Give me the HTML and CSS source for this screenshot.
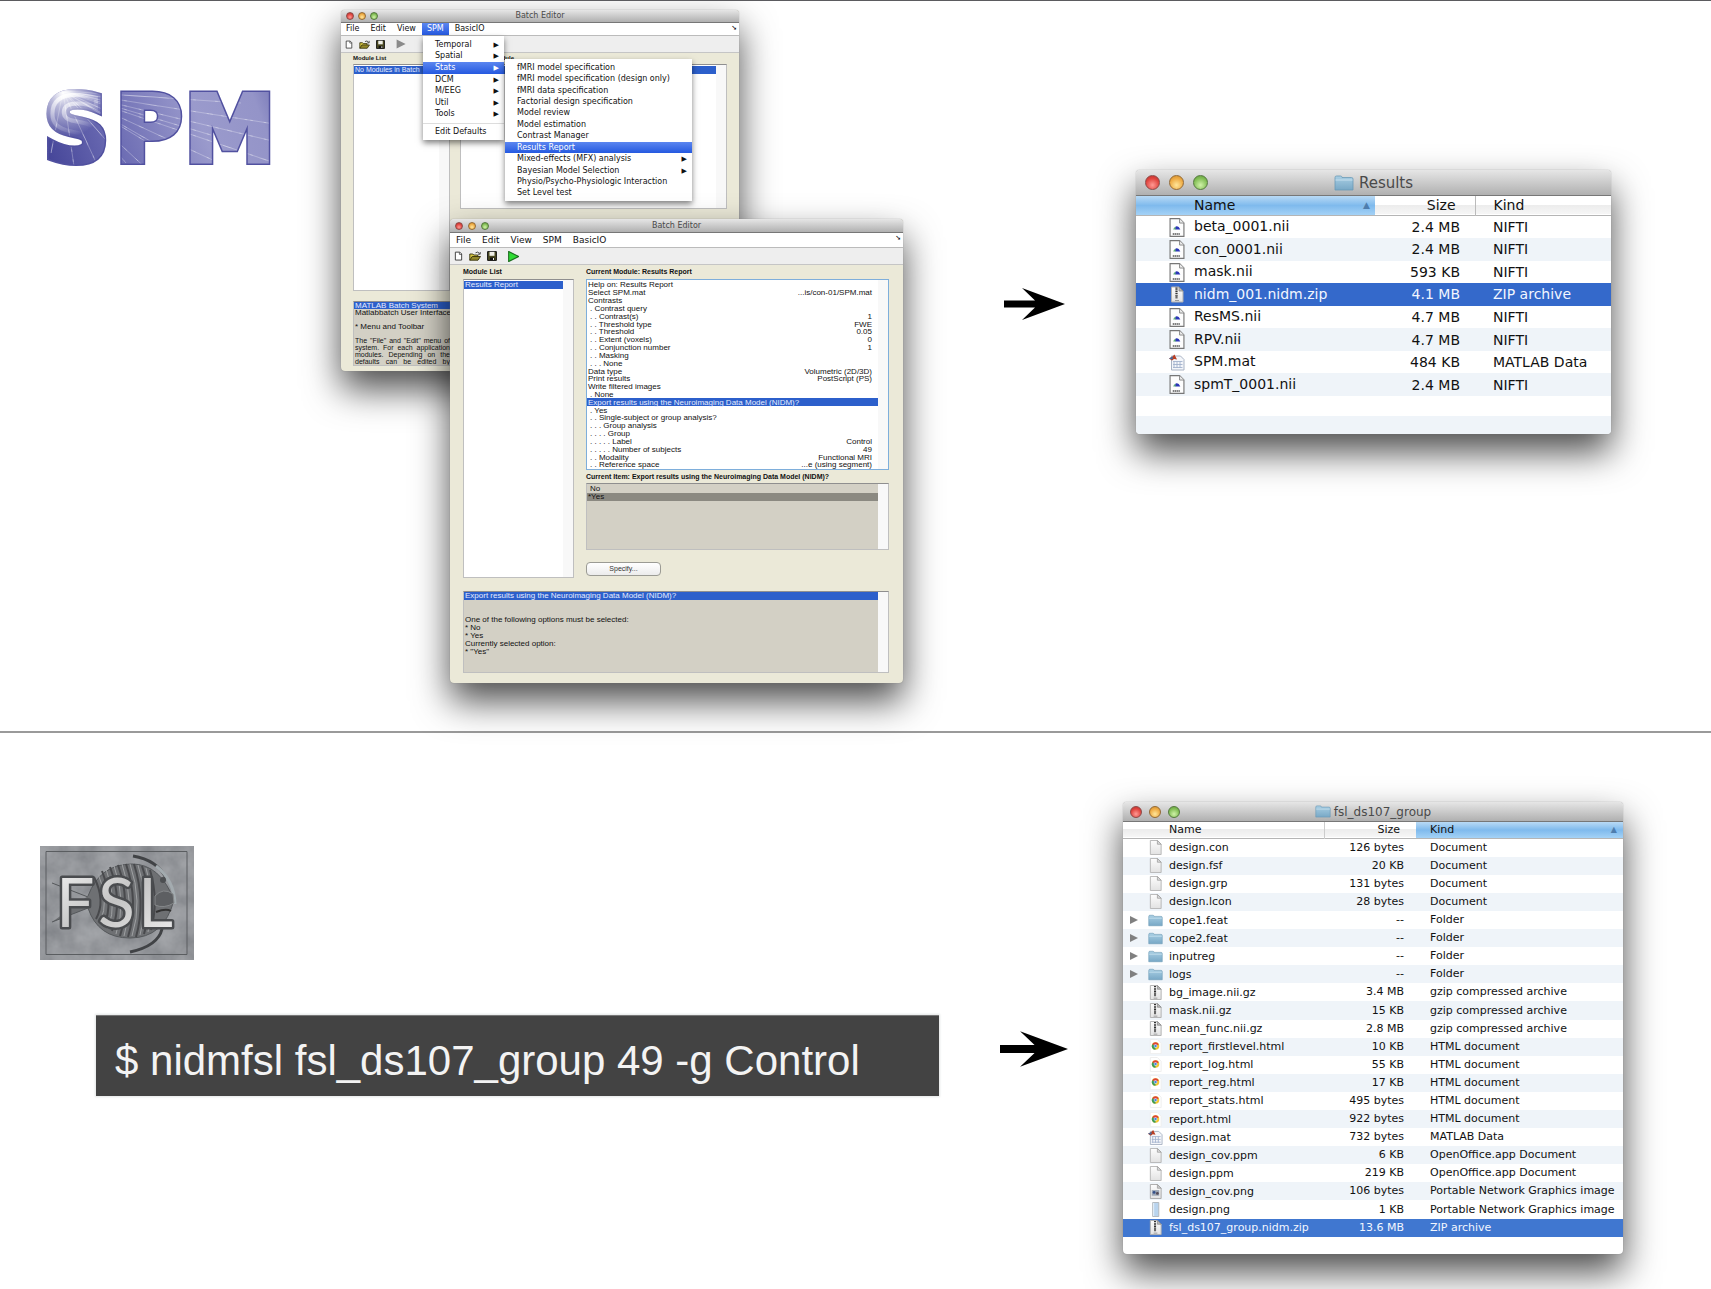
FILE: index.html
```html
<!DOCTYPE html>
<html lang="en">
<head>
<meta charset="utf-8">
<title>NIDM-Results export from SPM and FSL</title>
<link rel="stylesheet" href="styles.css">
</head>
<body>
<svg class="defs" width="0" height="0" aria-hidden="true">
  <defs>
    <linearGradient id="paper" x1="0" y1="0" x2="0" y2="1"><stop offset="0" stop-color="#fdfdfd"/><stop offset="1" stop-color="#e2e2e2"/></linearGradient>
    <linearGradient id="blue" x1="0" y1="0" x2="0" y2="1"><stop offset="0" stop-color="#a9cfe4"/><stop offset="1" stop-color="#78a8c6"/></linearGradient>
  </defs>
  <symbol id="i-doc" viewBox="0 0 16 16"><path d="M2.5.5h7.5l4 4v11H2.5z" fill="url(#paper)" stroke="#b5b5b5"/><path d="M10 .5v4h4z" fill="#ddd" stroke="#999" stroke-width=".8"/></symbol>
  <symbol id="i-nii" viewBox="0 0 16 20"><path d="M.7.7h10l4.600 4.600v14H.7z" fill="#fdfdfd" stroke="#777" stroke-width="1.200"/><path d="M10.700.7v4.600h4.600" fill="#eee" stroke="#888"/><path d="M4 12q.5-2.500 3-2.500V12z" fill="#5fae7a"/><path d="M6.500 9q3-1.500 5 3h-5z" fill="#2b35b8"/><path d="M3.500 16.800h8" stroke="#555" stroke-width="1.500" stroke-dasharray="1.500 .5"/></symbol>
  <symbol id="i-zip" viewBox="0 0 16 16"><path d="M2.500.5h7.500l4 4v11H2.500z" fill="url(#paper)" stroke="#b0b0b0"/><path d="M10 .5v4h4z" fill="#bbb" stroke="#888" stroke-width=".8"/><path d="M7.500 1v8" stroke="#333" stroke-width="2.200" stroke-dasharray="1.200 .6"/><path d="M7.500 8.500v3.500" stroke="#666" stroke-width="2.200"/><path d="M6 14h4" stroke="#999"/></symbol>
  <symbol id="i-folder" viewBox="0 0 20 16"><path d="M1 15V2.500Q1 1 2.500 1h4Q8 1 8 2.500h9.500Q19 2.500 19 4v11z" fill="url(#blue)" stroke="#6b9ab6" stroke-width=".8"/><path d="M1.500 5h17" stroke="#c7e0ee"/></symbol>
  <symbol id="i-html" viewBox="0 0 16 16"><path d="M2.500.5h7.500l4 4v11H2.500z" fill="#fff" stroke="#eee"/><circle cx="8" cy="7.500" r="4" fill="#f2c531"/><path d="M8 7.500 4.500 5.500A4 4 0 0 1 11.500 5.500z" fill="#dc4437"/><path d="M8 7.500 4.500 5.500A4 4 0 0 0 8 11.500z" fill="#3b9c59"/><circle cx="8" cy="7.500" r="1.900" fill="#fff"/><circle cx="8" cy="7.500" r="1.400" fill="#4a83dd"/></symbol>
  <symbol id="i-mat" viewBox="0 0 16 16"><path d="M2.500 1.500h9l3.500 3.500v10.500H2.500z" fill="#f4f6fa" stroke="#a9b3c4"/><path d="M4 7h9.500M4 10h9.500M4 13h9.500M5 7v6.500M8 7v6.500M11 7v6.500" stroke="#a3b2cd" stroke-width=".9"/><path d="M0 4 3.500 2 5.500 0 8 5 5 4.500 3 6z" fill="#b93d22"/><path d="M0 4 3.500 2 4 4 2.500 5z" fill="#456a9b"/></symbol>
  <symbol id="i-png" viewBox="0 0 16 16"><path d="M2.500.5h7.500l4 4v11H2.500z" fill="url(#paper)" stroke="#a8a8a8"/><path d="M10 .5v4h4z" fill="#ccc" stroke="#999" stroke-width=".8"/><path d="M4 6.500h8v6H4z" fill="#9ba6b5"/><circle cx="6.500" cy="9" r="1.500" fill="#35508a"/><circle cx="10" cy="10" r="1.500" fill="#554a55"/></symbol>
  <symbol id="i-strip" viewBox="0 0 16 16"><path d="M5 .5h6.500v15H5z" fill="#b9d4ee" stroke="#b0b5ba"/><path d="M6 1v14" stroke="#e9f2fa"/></symbol>
  <symbol id="i-new" viewBox="0 0 10 10"><path d="M1.500.7h5l2 2v6.800h-7z" fill="#fff" stroke="#333"/><path d="M6 1v2.200h2.500" fill="none" stroke="#333" stroke-width=".8"/></symbol>
  <symbol id="i-open" viewBox="0 0 12 10"><path d="M.8 9.200V3h3l1 1h4v1.600" fill="#d6c745" stroke="#332f0a" stroke-width=".9"/><path d="M.8 9.200 3.200 5.500h8.300L9 9.200z" fill="#93882a" stroke="#332f0a" stroke-width=".9"/><path d="M6.500 1.800Q9 0 10.500 2.500M11.200 1v2.200H9" fill="none" stroke="#222" stroke-width=".8"/></symbol>
  <symbol id="i-save" viewBox="0 0 10 10"><path d="M.6.6h8.800v8.800H.6z" fill="#4c4a21" stroke="#111"/><path d="M2.500.8h5v4h-5z" fill="#efefe8"/><path d="M3 6.500h4.500V9H3z" fill="#111"/><path d="M6 7h1v2H6z" fill="#eee"/></symbol>
  <symbol id="i-run" viewBox="0 0 10 10"><path d="M.6.400 9.600 5 .6 9.600z"/></symbol>
  <symbol id="i-arrow" viewBox="0 0 61 32"><path d="M0 12.500h31L18 0l43 16-43 16 13-12.500H0z"/></symbol>
</svg>

<main class="page">
  <section class="row row-spm">
    <svg class="spm-logo" width="240" height="90" viewBox="0 0 240 90" role="img" aria-label="SPM">
      <defs>
        <linearGradient id="spmFill" gradientUnits="userSpaceOnUse" x1="0" y1="90" x2="240" y2="0"><stop offset="0" stop-color="#3f3f94"/><stop offset=".3" stop-color="#6a6ab2"/><stop offset=".65" stop-color="#9a9acc"/><stop offset=".88" stop-color="#9494c8"/><stop offset="1" stop-color="#6f6fb2"/></linearGradient>
        <radialGradient id="spmGlow" gradientUnits="userSpaceOnUse" cx="22" cy="10" r="45"><stop offset="0" stop-color="#fff"/><stop offset=".3" stop-color="#fff" stop-opacity=".6"/><stop offset="1" stop-color="#fff" stop-opacity="0"/></radialGradient>
        <pattern id="spmRays" width="240" height="90" patternUnits="userSpaceOnUse"><path d="M22 8 60 90M22 8 34 90M22 8 85 80M22 8 110 90M22 8 150 86M22 8 200 90M22 8 240 82M22 8 240 60M22 8 240 42M22 8 200 20M22 8 130 70M22 8 170 52M22 8 10 70" stroke="#fff" stroke-opacity=".35" stroke-width=".8"/></pattern>
        <text id="spmText" class="spm-word" x="3 75 144" y="78">SPM</text>
      </defs>
      <use href="#spmText" fill="#5151a0" stroke="#5151a0" stroke-width="8"/>
      <use href="#spmText" fill="url(#spmFill)" stroke="url(#spmFill)" stroke-width="5"/>
      <use href="#spmText" fill="url(#spmRays)" stroke="url(#spmRays)" stroke-width="5"/>
      <use href="#spmText" fill="url(#spmGlow)" stroke="url(#spmGlow)" stroke-width="8"/>
    </svg>

    <div class="desktop">
      <article class="batch batch-back">
        <header class="titlebar"><span class="lights"><i></i><i></i><i></i></span><h2>Batch Editor</h2></header>
        <nav class="menubar">
          <button>File</button><button>Edit</button><button>View</button><button class="open">SPM</button><button>BasicIO</button><span class="dock">➘</span>
        </nav>
        <div class="toolbar">
          <button aria-label="New"><svg width="8" height="9"><use href="#i-new"/></svg></button>
          <button aria-label="Open"><svg width="11" height="9"><use href="#i-open"/></svg></button>
          <button aria-label="Save"><svg width="9" height="9"><use href="#i-save"/></svg></button>
          <button class="run" aria-label="Run"><svg width="10" height="10"><use href="#i-run"/></svg></button>
        </div>
        <div class="batch-body">
          <div class="col"><h3>Module List</h3><ul class="list modules"><li class="sel">No Modules in Batch</li></ul></div>
          <div class="col"><h3>No Current Module</h3><ul class="list current"><li class="sel">&nbsp;</li></ul></div>
          <div class="list help">
            <p class="sel">MATLAB Batch System</p><p>Matlabbatch User Interface</p><p>&nbsp;</p><p>* Menu and Toolbar</p><p>&nbsp;</p>
            <p class="just">The "File" and "Edit" menu of</p><p class="just">system. For each application</p><p class="just">modules. Depending on the</p><p class="just">defaults can be edited by</p>
          </div>
        </div>
        <ul class="menu menu-spm">
          <li><button>Temporal<b>▶</b></button></li><li><button>Spatial<b>▶</b></button></li><li class="hot"><button>Stats<b>▶</b></button></li><li><button>DCM<b>▶</b></button></li><li><button>M/EEG<b>▶</b></button></li><li><button>Util<b>▶</b></button></li><li><button>Tools<b>▶</b></button></li>
          <li class="last"><button>Edit Defaults</button></li>
        </ul>
        <ul class="menu menu-stats">
          <li><button>fMRI model specification</button></li><li><button>fMRI model specification (design only)</button></li><li><button>fMRI data specification</button></li><li><button>Factorial design specification</button></li><li><button>Model review</button></li><li><button>Model estimation</button></li><li><button>Contrast Manager</button></li><li class="hot"><button>Results Report</button></li><li><button>Mixed-effects (MFX) analysis<b>▶</b></button></li><li><button>Bayesian Model Selection<b>▶</b></button></li><li><button>Physio/Psycho-Physiologic Interaction</button></li><li><button>Set Level test</button></li>
        </ul>
      </article>

      <article class="batch batch-front">
        <header class="titlebar"><span class="lights"><i></i><i></i><i></i></span><h2>Batch Editor</h2></header>
        <nav class="menubar">
          <button>File</button><button>Edit</button><button>View</button><button>SPM</button><button>BasicIO</button><span class="dock">➘</span>
        </nav>
        <div class="toolbar">
          <button aria-label="New"><svg width="9" height="10"><use href="#i-new"/></svg></button>
          <button aria-label="Open"><svg width="12" height="10"><use href="#i-open"/></svg></button>
          <button aria-label="Save"><svg width="10" height="10"><use href="#i-save"/></svg></button>
          <button class="run" aria-label="Run"><svg width="11" height="11"><use href="#i-run"/></svg></button>
        </div>
        <div class="batch-body">
          <div class="col"><h3>Module List</h3><ul class="list modules"><li class="sel">Results Report</li></ul></div>
          <div class="col">
            <h3>Current Module: Results Report</h3>
            <ul class="list current">
              <li>Help on: Results Report</li>
              <li>Select SPM.mat<span>...is/con-01/SPM.mat</span></li>
              <li>Contrasts</li>
              <li class="in">. Contrast query</li>
              <li class="in">. . Contrast(s)<span>1</span></li>
              <li class="in">. . Threshold type<span>FWE</span></li>
              <li class="in">. . Threshold<span>0.05</span></li>
              <li class="in">. . Extent (voxels)<span>0</span></li>
              <li class="in">. . Conjunction number<span>1</span></li>
              <li class="in">. . Masking</li>
              <li class="in">. . . None</li>
              <li>Data type<span>Volumetric (2D/3D)</span></li>
              <li>Print results<span>PostScript (PS)</span></li>
              <li>Write filtered images</li>
              <li class="in">. None</li>
              <li class="sel">Export results using the Neuroimaging Data Model (NIDM)?</li>
              <li class="in">. Yes</li>
              <li class="in">. . Single-subject or group analysis?</li>
              <li class="in">. . . Group analysis</li>
              <li class="in">. . . . Group</li>
              <li class="in">. . . . . Label<span>Control</span></li>
              <li class="in">. . . . . Number of subjects<span>49</span></li>
              <li class="in">. . Modality<span>Functional MRI</span></li>
              <li class="in">. . Reference space<span>...e (using segment)</span></li>
            </ul>
            <h3 class="item-title">Current Item: Export results using the Neuroimaging Data Model (NIDM)?</h3>
            <ul class="list options"><li class="in">No</li><li class="chosen">*Yes</li></ul>
            <button class="specify">Specify...</button>
          </div>
          <div class="list help">
            <p class="sel">Export results using the Neuroimaging Data Model (NIDM)?</p><p>&nbsp;</p><p>&nbsp;</p>
            <p>One of the following options must be selected:</p><p>* No</p><p>* Yes</p><p>Currently selected option:</p><p>* "Yes"</p>
          </div>
        </div>
      </article>
    </div>

    <svg class="arrow" width="61" height="32" aria-hidden="true"><use href="#i-arrow"/></svg>

    <article class="finder finder-results">
      <header class="titlebar"><span class="lights"><i></i><i></i><i></i></span><h2><svg width="20" height="16"><use href="#i-folder"/></svg>Results</h2></header>
      <table>
        <thead><tr><th class="name sorted">Name<b>▲</b></th><th class="size">Size</th><th class="kind">Kind</th></tr></thead>
        <tbody>
          <tr><td class="name"><svg><use href="#i-nii"/></svg>beta_0001.nii</td><td class="size">2.4 MB</td><td class="kind">NIFTI</td></tr>
          <tr><td class="name"><svg><use href="#i-nii"/></svg>con_0001.nii</td><td class="size">2.4 MB</td><td class="kind">NIFTI</td></tr>
          <tr><td class="name"><svg><use href="#i-nii"/></svg>mask.nii</td><td class="size">593 KB</td><td class="kind">NIFTI</td></tr>
          <tr class="selected"><td class="name"><svg><use href="#i-zip"/></svg>nidm_001.nidm.zip</td><td class="size">4.1 MB</td><td class="kind">ZIP archive</td></tr>
          <tr><td class="name"><svg><use href="#i-nii"/></svg>ResMS.nii</td><td class="size">4.7 MB</td><td class="kind">NIFTI</td></tr>
          <tr><td class="name"><svg><use href="#i-nii"/></svg>RPV.nii</td><td class="size">4.7 MB</td><td class="kind">NIFTI</td></tr>
          <tr><td class="name"><svg><use href="#i-mat"/></svg>SPM.mat</td><td class="size">484 KB</td><td class="kind">MATLAB Data</td></tr>
          <tr><td class="name"><svg><use href="#i-nii"/></svg>spmT_0001.nii</td><td class="size">2.4 MB</td><td class="kind">NIFTI</td></tr>
        </tbody>
      </table>
      <div class="filler"></div>
    </article>
  </section>

  <section class="row row-fsl">
    <div class="fsl-side">
      <svg class="fsl-logo" width="154" height="114" viewBox="0 0 154 114" role="img" aria-label="FSL">
        <defs>
          <filter id="stone" x="0" y="0" width="1" height="1"><feTurbulence type="fractalNoise" baseFrequency=".05" numOctaves="4" seed="4"/><feColorMatrix values=".5 0 0 0 .2  .5 0 0 0 .21  .5 0 0 0 .23  0 0 0 0 1"/></filter>
          <linearGradient id="chrome" x1="0" y1="0" x2="1" y2="1"><stop offset="0" stop-color="#f4f4f4"/><stop offset=".5" stop-color="#c4c4c4"/><stop offset="1" stop-color="#eee"/></linearGradient>
          <text id="fslText" class="fsl-word" x="16 58 98" y="81">FSL</text>
        </defs>
        <rect width="154" height="114" fill="#787b80"/>
        <rect width="154" height="114" filter="url(#stone)" opacity=".5"/>
        <path d="M6 5.500h141v103H6z" fill="none" stroke="#5a5d60"/>
        <path d="M48 50Q60 18 92 18q28 0 42 36-10 38-44 38-32 0-42-30L12 76m0-39 36 14" fill="#6e7073" stroke="#55585b"/>
        <g fill="none" stroke="#48494c" stroke-width="2"><path d="M54 31q12 24 2 42M62 25q12 30 2 56M70 21q13 34 2 64M78 19q13 36 2 71M86 18q13 38 2 73M94 18q12 38 2 73M102 20q12 34 2 68M110 24q9 30 1 60"/></g>
        <g fill="none" stroke="#9fa1a3"><path d="M58 28q12 26 2 48M66 23q12 32 2 60M74 20q13 35 2 68M82 18q13 37 2 72M90 18q13 38 2 72M98 19q12 36 2 70M106 22q10 32 2 64"/></g>
        <path d="M93 10q24 4 33 22M90 106q28-6 32-23" fill="none" stroke="#414346" stroke-width="3"/>
        <path d="M116 20q18 14 19 38" fill="none" stroke="#a3abaf" stroke-width="3"/>
        <path d="M115 50q8-9 18-2l1 9q-10 6-19 2z" fill="#5d5f62" stroke="#85888a"/><circle cx="123" cy="34" r="3" fill="#4c4e51"/><path d="M116 66q10-4 15-1" stroke="#333" stroke-width="2" fill="none"/>
        <use href="#fslText" stroke="#4a4c4f" stroke-width="5" stroke-linejoin="round"/>
        <use href="#fslText" fill="url(#chrome)"/>
      </svg>
      <pre class="terminal"><code>$ nidmfsl fsl_ds107_group 49 -g Control</code></pre>
    </div>

    <svg class="arrow" width="68" height="36" aria-hidden="true"><use href="#i-arrow"/></svg>

    <article class="finder finder-group">
      <header class="titlebar"><span class="lights"><i></i><i></i><i></i></span><h2><svg width="16" height="13"><use href="#i-folder"/></svg>fsl_ds107_group</h2></header>
      <table>
        <thead><tr><th class="name">Name</th><th class="size">Size</th><th class="kind sorted">Kind<b>▲</b></th></tr></thead>
        <tbody>
          <tr><td class="name"><svg><use href="#i-doc"/></svg>design.con</td><td class="size">126 bytes</td><td class="kind">Document</td></tr>
          <tr><td class="name"><svg><use href="#i-doc"/></svg>design.fsf</td><td class="size">20 KB</td><td class="kind">Document</td></tr>
          <tr><td class="name"><svg><use href="#i-doc"/></svg>design.grp</td><td class="size">131 bytes</td><td class="kind">Document</td></tr>
          <tr><td class="name"><svg><use href="#i-doc"/></svg>design.lcon</td><td class="size">28 bytes</td><td class="kind">Document</td></tr>
          <tr class="folder"><td class="name"><svg><use href="#i-folder"/></svg>cope1.feat</td><td class="size">--</td><td class="kind">Folder</td></tr>
          <tr class="folder"><td class="name"><svg><use href="#i-folder"/></svg>cope2.feat</td><td class="size">--</td><td class="kind">Folder</td></tr>
          <tr class="folder"><td class="name"><svg><use href="#i-folder"/></svg>inputreg</td><td class="size">--</td><td class="kind">Folder</td></tr>
          <tr class="folder"><td class="name"><svg><use href="#i-folder"/></svg>logs</td><td class="size">--</td><td class="kind">Folder</td></tr>
          <tr><td class="name"><svg><use href="#i-zip"/></svg>bg_image.nii.gz</td><td class="size">3.4 MB</td><td class="kind">gzip compressed archive</td></tr>
          <tr><td class="name"><svg><use href="#i-zip"/></svg>mask.nii.gz</td><td class="size">15 KB</td><td class="kind">gzip compressed archive</td></tr>
          <tr><td class="name"><svg><use href="#i-zip"/></svg>mean_func.nii.gz</td><td class="size">2.8 MB</td><td class="kind">gzip compressed archive</td></tr>
          <tr><td class="name"><svg><use href="#i-html"/></svg>report_firstlevel.html</td><td class="size">10 KB</td><td class="kind">HTML document</td></tr>
          <tr><td class="name"><svg><use href="#i-html"/></svg>report_log.html</td><td class="size">55 KB</td><td class="kind">HTML document</td></tr>
          <tr><td class="name"><svg><use href="#i-html"/></svg>report_reg.html</td><td class="size">17 KB</td><td class="kind">HTML document</td></tr>
          <tr><td class="name"><svg><use href="#i-html"/></svg>report_stats.html</td><td class="size">495 bytes</td><td class="kind">HTML document</td></tr>
          <tr><td class="name"><svg><use href="#i-html"/></svg>report.html</td><td class="size">922 bytes</td><td class="kind">HTML document</td></tr>
          <tr><td class="name"><svg><use href="#i-mat"/></svg>design.mat</td><td class="size">732 bytes</td><td class="kind">MATLAB Data</td></tr>
          <tr><td class="name"><svg><use href="#i-doc"/></svg>design_cov.ppm</td><td class="size">6 KB</td><td class="kind">OpenOffice.app Document</td></tr>
          <tr><td class="name"><svg><use href="#i-doc"/></svg>design.ppm</td><td class="size">219 KB</td><td class="kind">OpenOffice.app Document</td></tr>
          <tr><td class="name"><svg><use href="#i-png"/></svg>design_cov.png</td><td class="size">106 bytes</td><td class="kind">Portable Network Graphics image</td></tr>
          <tr><td class="name"><svg><use href="#i-strip"/></svg>design.png</td><td class="size">1 KB</td><td class="kind">Portable Network Graphics image</td></tr>
          <tr class="selected"><td class="name"><svg><use href="#i-zip"/></svg>fsl_ds107_group.nidm.zip</td><td class="size">13.6 MB</td><td class="kind">ZIP archive</td></tr>
        </tbody>
      </table>
    </article>
  </section>
</main>
</body>
</html>
```

FILE: styles.css
```css
* { box-sizing: border-box; }

body {
  margin: 0;
  background: #fff;
  color: #111;
  font-family: "DejaVu Sans", "Noto Sans", sans-serif;
}

h2, h3, p, ul, pre { margin: 0; padding: 0; font-weight: normal; }
ul { list-style: none; }
button { margin: 0; padding: 0; border: 0; background: none; color: inherit; font: inherit; }
b, i { font-weight: normal; font-style: normal; }
.defs { position: absolute; }

/* Page rows */
.page { border-top: 1px solid #5b5b5f; overflow: hidden; }
.row { display: grid; align-items: start; }
.row-spm {
  grid-template-columns: minmax(0, 341fr) minmax(0, 663fr) minmax(0, 132fr) minmax(0, 575fr);
  padding-bottom: 48px;
  border-bottom: 2px solid #9a9a9a;
}
.row-fsl {
  grid-template-columns: minmax(0, 1000fr) minmax(0, 123fr) minmax(0, 588fr);
  padding-bottom: 35px;
}
.row-spm .arrow { margin-top: 287px; }
.row-fsl .arrow { margin-top: 298px; }

/* Logos */
.spm-logo { display: block; margin: 82px 0 0 41px; }
.spm-word { font: bold 90px "DejaVu Sans", sans-serif; }
.fsl-logo { display: block; margin: 113px 0 0 40px; }
.fsl-word { font: 68px "Lato", sans-serif; }

.terminal {
  margin: 55px 61px 0 96px;
  padding: 10px 19px 0;
  background: #434343;
  border-top: 1px solid #777;
  box-shadow: 0 0 2px 1px #e4e6e6;
  color: #f3f3f3;
}
.terminal code { display: block; font: 42px/70px "Liberation Sans", Arial, sans-serif; }

/* Window chrome shared by every window */
.batch, .finder {
  display: flex;
  flex-direction: column;
  border-radius: 4px;
  box-shadow: 0 0 1px #777, 0 18px 36px rgba(0, 0, 0, .7);
}
.titlebar {
  display: grid;
  grid-template-columns: 1fr auto 1fr;
  align-items: center;
  border-radius: 4px 4px 0 0;
  border-bottom: 1px solid #777;
  background: linear-gradient(#e6e6e6, #b0b0b0);
  color: #4a4a4a;
}
.titlebar h2 { display: flex; align-items: center; }
.lights { display: flex; }
.lights i { border-radius: 50%; border: 1px solid #8d4a48; background: radial-gradient(circle at 50% 70%, #ff9a94, #e0443e 60%, #b9302c); }
.lights i:nth-child(2) { border-color: #946a35; background: radial-gradient(circle at 50% 70%, #ffe69a, #eeab44 60%, #c98a2c); }
.lights i:nth-child(3) { border-color: #55793f; background: radial-gradient(circle at 50% 70%, #d0f2a8, #84bf57 60%, #5f9c3a); }

/* Batch Editor windows, free on the desktop */
.desktop { position: relative; height: 682px; }
.batch { position: absolute; background: #ebe9d8; }
.batch-back { left: 0; top: 9px; width: 398px; height: 361px; }
.batch-front { left: 109px; top: 218px; width: 453px; height: 464px; }
.batch .titlebar { height: 13px; padding: 0 5px; }
.batch-front .titlebar { height: 14px; }
.batch .titlebar h2 { font-size: 8px; line-height: 12px; }
.batch .lights { gap: 4px; }
.batch .lights i { width: 8px; height: 8px; }
.batch-front .lights { gap: 5px; }

.menubar {
  display: flex;
  align-items: stretch;
  gap: 1px;
  height: 13px;
  padding-right: 2px;
  background: #fff;
  border-bottom: 1px solid #bbb;
  font-size: 8px;
  line-height: 12px;
}
.menubar button { padding: 0 5px; }
.menubar .open { background: linear-gradient(#5b86f0, #2559e0); color: #fff; }
.dock { margin-left: auto; font: bold 7px/11px "DejaVu Sans", sans-serif; color: #000; }
.batch-front .menubar { height: 15px; padding-left: 1px; font-size: 9px; line-height: 14px; }

.toolbar {
  display: flex;
  align-items: center;
  gap: 6px;
  height: 17px;
  padding-left: 4px;
  background: #eee;
  border-bottom: 1px solid #c5c5c5;
}
.toolbar button, .toolbar svg { display: block; }
.toolbar .run { margin-left: 5px; fill: #8b8b8b; }
.batch-front .toolbar .run { fill: #2fdc34; stroke: #1b6d1e; }

.batch-body {
  display: grid;
  grid-template-columns: 97px 267px;
  column-gap: 10px;
  padding: 0 12px;
  font: 8px/8px "Liberation Sans", Arial, sans-serif;
}
.batch-front .batch-body { grid-template-columns: 111px 303px; column-gap: 12px; padding: 0 14px 0 13px; }
.batch h3 { height: 11px; font: bold 6px/11px "Liberation Sans", Arial, sans-serif; }
.batch-front h3 { height: 14px; font-size: 7px; line-height: 14px; }
.list {
  overflow: hidden;
  padding: 1px 10px 0 0;
  border: 1px solid #bfbfbf;
  border-top-color: #8f8f8f;
  background: linear-gradient(#f8f8f8, #f8f8f8) right / 10px 100% no-repeat #fff;
}
.list li, .list p { padding: 0 1px; white-space: pre; }
.list .sel { background: #2c5fcb; color: #e6ecff; }
.list .in { padding-left: 3px; }
.modules { height: 227px; }
.batch-back .modules { padding-right: 0; font-size: 7px; }
.current { height: 145px; }
.batch-front .modules { height: 299px; }
.batch-front .current { display: flex; flex-direction: column; height: 191px; border-color: #7eaedb; line-height: 7px; }
.batch-front .current li { display: flex; flex: 1; justify-content: space-between; align-items: center; padding-right: 6px; }
.batch-front .item-title { height: 13px; line-height: 13px; }
.options, .help { background-color: #d3d0c5; }
.options { height: 67px; }
.options .chosen { background: #8b8981; }
.help { grid-column: 1 / -1; height: 65px; margin-top: 10px; padding-top: 0; line-height: 7px; }
.help .just { width: 97px; font-size: 7px; text-align: justify; text-align-last: justify; white-space: normal; }
.batch-front .help { height: 82px; margin-top: 13px; line-height: 8px; }
.specify {
  width: 75px;
  height: 14px;
  margin-top: 12px;
  border: 1px solid #9b9b94;
  border-radius: 4px;
  background: linear-gradient(#fff, #ececec);
  color: #333;
  font: 7px/10px "Liberation Sans", Arial, sans-serif;
}

/* Drop-down menus over the back window */
.menu {
  position: absolute;
  display: flex;
  flex-direction: column;
  background: #fff;
  box-shadow: 0 3px 6px rgba(0, 0, 0, .5);
  font-size: 8px;
  line-height: 10px;
}
.menu li { display: flex; flex: 1; }
.menu button { display: flex; flex: 1; align-items: center; justify-content: space-between; padding: 0 5px 0 12px; text-align: left; white-space: nowrap; }
.menu b { font-size: 7px; line-height: 8px; }
.menu .hot { background: linear-gradient(#5b86f0, #2559e0); color: #fff; }
.menu .last { flex: 0 0 17px; margin-top: 3px; border-top: 1px solid #ddd; }
.menu-spm { left: 82px; top: 26px; width: 81px; height: 104px; padding-top: 3px; }
.menu-stats { left: 164px; top: 49px; width: 187px; height: 142px; padding: 3px 0 2px; }

/* Finder windows */
.finder { background: #fff; }
.finder table { width: 100%; border-collapse: collapse; table-layout: fixed; }
.finder th, .finder td { padding: 0; font-weight: normal; text-align: left; white-space: nowrap; }
.finder thead tr { background: linear-gradient(#fff 50%, #ececec 50%, #f6f6f6); border-bottom: 1px solid #b5b5b5; }
.finder tbody tr:nth-child(even) { background: #eff4f9; }
.finder tbody tr.selected { background: #3469cb; color: #f2f6ff; }
.finder .size { text-align: right; }
.finder th.sorted { background: linear-gradient(#b9daf5, #7fbaed 50%, #a4d2f6); }
.finder th b { float: right; color: #4e7dad; }
.finder td svg { display: inline-block; vertical-align: middle; }

.finder-results { width: 475px; margin-top: 169px; font-size: 14px; }
.finder-results .titlebar { height: 26px; padding: 0 9px; }
.finder-results .titlebar h2 { gap: 5px; font-size: 15px; line-height: 20px; }
.finder-results .lights { gap: 9px; }
.finder-results .lights i { width: 15px; height: 15px; }
.finder-results table { height: 200px; }
.finder-results thead tr { height: 19px; }
.finder-results th, .finder-results td { line-height: 18px; }
.finder-results .name { width: 239px; padding-left: 33px; }
.finder-results th.name { padding-left: 58px; }
.finder-results th b { margin-right: 5px; font-size: 9px; }
.finder-results .size { width: 100px; padding-right: 15px; }
.finder-results th.size { padding-right: 19px; border-right: 1px solid #bbb; }
.finder-results .kind { padding-left: 18px; }
.finder-results td svg { width: 16px; height: 19px; margin-right: 9px; }
.finder-results .filler { height: 38px; border-radius: 0 0 4px 4px; background: linear-gradient(#fff 20px, #eff4f9 20px); }

.finder-group { width: 500px; margin-top: 69px; padding-bottom: 17px; font-size: 11px; }
.finder-group .titlebar { height: 20px; padding: 0 7px; }
.finder-group .titlebar h2 { gap: 3px; font-size: 12px; line-height: 16px; }
.finder-group .lights { gap: 7px; }
.finder-group .lights i { width: 12px; height: 12px; }
.finder-group table { height: 415px; }
.finder-group thead tr { height: 16px; }
.finder-group th, .finder-group td { line-height: 14px; }
.finder-group .name { width: 201px; padding-left: 25px; }
.finder-group th.name { padding-left: 46px; border-right: 1px solid #ccc; }
.finder-group th b { margin-right: 6px; font-size: 8px; }
.finder-group .size { width: 92px; padding-right: 12px; }
.finder-group th.size { padding-right: 16px; }
.finder-group .kind { padding-left: 14px; }
.finder-group tbody tr.selected { background: #4077d0; }
.finder-group td svg { width: 15px; height: 15px; margin-right: 6px; }
.finder-group .folder .name { padding-left: 7px; }
.finder-group .folder .name::before { content: ""; display: inline-block; margin-right: 10px; border: 4px solid transparent; border-left: 8px solid #808080; border-right: 0; vertical-align: middle; }
```
